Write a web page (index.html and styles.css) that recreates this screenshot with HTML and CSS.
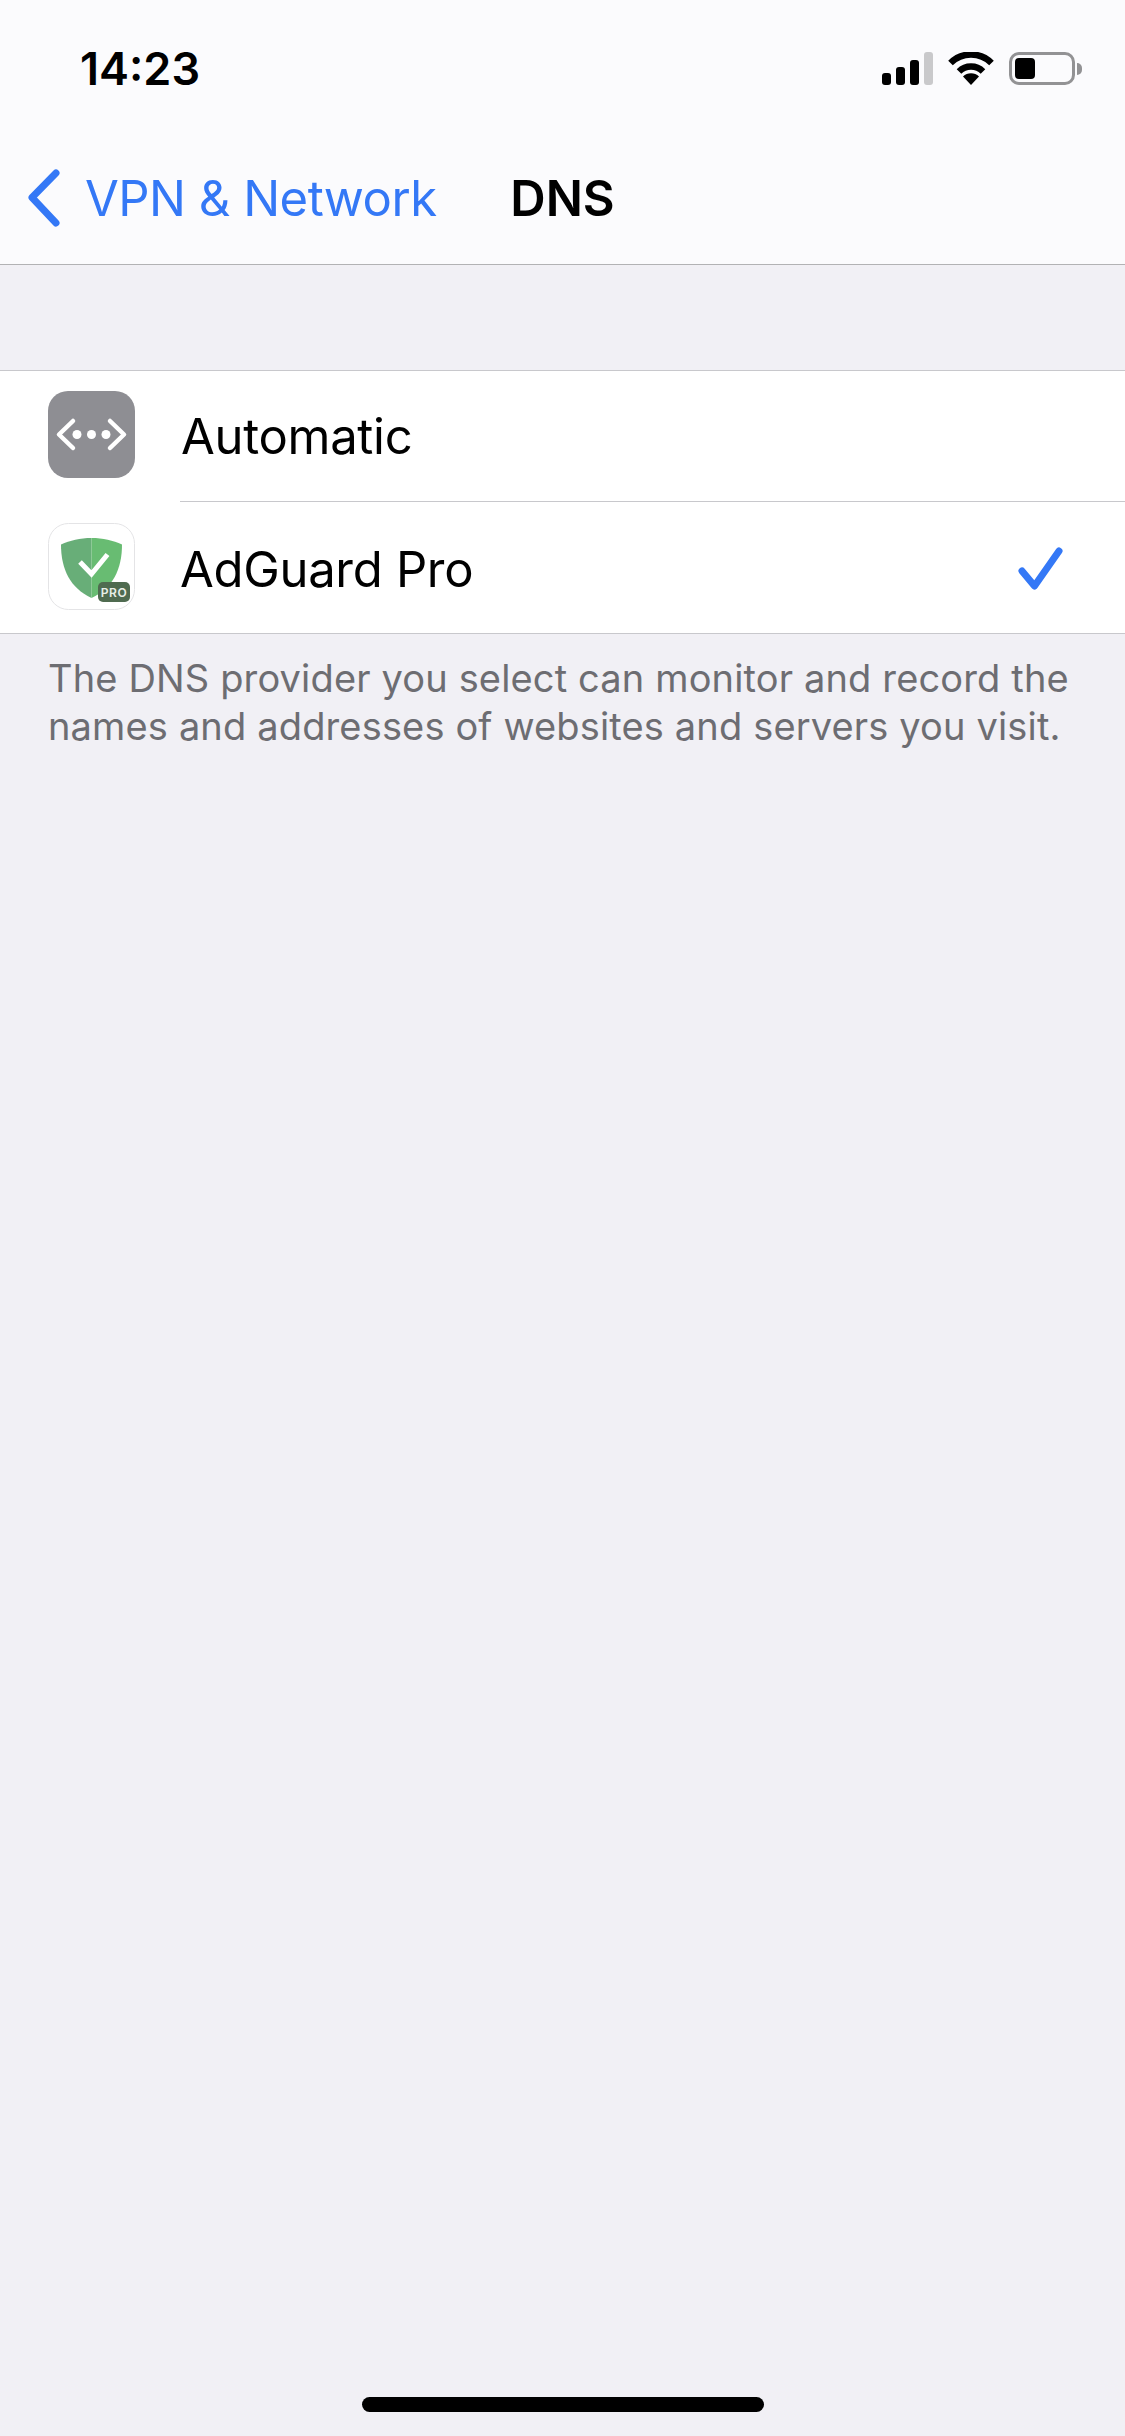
FILE: index.html
```html
<!DOCTYPE html>
<html lang="en">
<head>
    <meta charset="UTF-8">
    <meta name="viewport" content="width=device-width, initial-scale=1.0">
    <title>DNS</title>
    <link rel="stylesheet" href="styles.css">
</head>
<body>
    <div class="screen">
        <header class="top-bar">
            <div class="status-bar">
                <span class="time">14:23</span>
                <div class="status-icons">
                    <div class="signal">
                        <span class="bar bar-1"></span>
                        <span class="bar bar-2"></span>
                        <span class="bar bar-3"></span>
                        <span class="bar bar-4"></span>
                    </div>
                    <svg class="wifi" width="46" height="33" viewBox="0 0 46 33">
                        <path class="wifi-arc" d="M2.5 11 A29 29 0 0 1 43.5 11"/>
                        <path class="wifi-arc" d="M11 19.5 A17 17 0 0 1 35 19.5"/>
                        <path class="wifi-dot" d="M23 33 L15 24.5 A11.5 11.5 0 0 1 31 24.5 Z"/>
                    </svg>
                    <div class="battery">
                        <div class="battery-body"><span class="battery-level"></span></div>
                        <span class="battery-nub"></span>
                    </div>
                </div>
            </div>
            <nav class="nav-bar">
                <a class="back">
                    <svg class="chevron" width="36" height="58" viewBox="0 0 36 58">
                        <path d="M30 4 L6 28.500 L30 54"/>
                    </svg>
                    <span>VPN &amp; Network</span>
                </a>
                <h1 class="nav-title">DNS</h1>
            </nav>
        </header>

        <section class="list">
            <div class="row">
                <svg class="app-icon" width="87" height="87" viewBox="0 0 87 87">
                    <rect class="icon-grey" width="87" height="87" rx="20"/>
                    <path class="icon-code" d="M25 30 L11 43.500 L25 57"/>
                    <path class="icon-code" d="M62 30 L76 43.500 L62 57"/>
                    <circle class="icon-white" cx="29" cy="43.500" r="4.500"/>
                    <circle class="icon-white" cx="43.500" cy="43.500" r="4.500"/>
                    <circle class="icon-white" cx="58" cy="43.500" r="4.500"/>
                </svg>
                <div class="row-main">
                    <span class="row-label">Automatic</span>
                </div>
            </div>
            <div class="row">
                <svg class="app-icon" width="87" height="87" viewBox="0 0 87 87">
                    <rect class="icon-frame" x="0.500" y="0.500" width="86" height="86" rx="20"/>
                    <path class="shield-left" d="M43.500 15 C32 15 22 17.500 13 21.500 C13 46 22 65 43.500 75 Z"/>
                    <path class="shield-right" d="M43.500 15 C55 15 65 17.500 74 21.500 C74 46 65 65 43.500 75 Z"/>
                    <path class="shield-check" d="M32 39 L43.500 51 L59.500 31.500"/>
                    <rect class="pro-badge" x="50" y="59" width="32" height="20" rx="5"/>
                    <text class="pro-text" x="66" y="73.500" text-anchor="middle">PRO</text>
                </svg>
                <div class="row-main">
                    <span class="row-label">AdGuard Pro</span>
                    <svg class="check" width="52" height="50" viewBox="0 0 52 50">
                        <path d="M6 26 L18.500 41 L43 6"/>
                    </svg>
                </div>
            </div>
        </section>

        <p class="footnote">The DNS provider you select can monitor and record the names and addresses of websites and servers you visit.</p>

        <div class="home-indicator"></div>
    </div>
</body>
</html>
```

FILE: styles.css
```css
* {
    margin: 0;
    padding: 0;
    box-sizing: border-box;
}

body {
    font-family: 'Inter', 'Liberation Sans', sans-serif;
    background: #f1f0f5;
    color: #000;
}

.screen {
    display: flex;
    flex-direction: column;
    width: 1125px;
    height: 2436px;
    overflow: hidden;
}

.top-bar {
    background: #fbfbfd;
    border-bottom: 1px solid #b2b2b4;
    height: 265px;
}

.status-bar {
    display: flex;
    justify-content: space-between;
    align-items: center;
    height: 137px;
    padding: 0 43px 0 80px;
}

.time {
    font-size: 45px;
    font-weight: 600;
}

.status-icons {
    display: flex;
    align-items: center;
    gap: 15px;
}

.signal {
    display: flex;
    align-items: flex-end;
    gap: 4.500px;
    height: 33px;
}

.bar {
    width: 9.500px;
    background: #000;
    border-radius: 3px;
}

.bar-1 { height: 12px; }
.bar-2 { height: 18px; }
.bar-3 { height: 25px; }
.bar-4 { height: 33px; background: #c9c9cb; }

.wifi-arc {
    fill: none;
    stroke: #000;
    stroke-width: 6.500;
}

.wifi-dot {
    fill: #000;
}

.battery {
    display: flex;
    align-items: center;
    gap: 2px;
}

.battery-body {
    width: 66px;
    height: 33px;
    padding: 3px;
    border: 3px solid #929294;
    border-radius: 10px;
}

.battery-level {
    display: block;
    width: 20px;
    height: 21px;
    background: #000;
    border-radius: 4px;
}

.battery-nub {
    width: 5px;
    height: 12px;
    background: #929294;
    border-radius: 0 6px 6px 0;
}

.nav-bar {
    display: grid;
    grid-template-columns: 1fr auto 1fr;
    align-items: center;
    height: 127px;
    padding-bottom: 5px;
}

.back {
    display: flex;
    align-items: center;
    gap: 23px;
    padding-left: 26px;
    font-size: 49px;
    letter-spacing: -0.5px;
    color: #3478f6;
    white-space: nowrap;
}

.chevron path {
    fill: none;
    stroke: #3478f6;
    stroke-width: 7;
    stroke-linecap: round;
    stroke-linejoin: round;
}

.nav-title {
    font-size: 49px;
    font-weight: 600;
}

.list {
    margin-top: 105px;
    background: #fff;
    border-top: 1px solid #c8c8cc;
    border-bottom: 1px solid #c8c8cc;
}

.row {
    display: flex;
    align-items: center;
    gap: 46px;
    padding-left: 48px;
}

.row:first-child .app-icon {
    margin-bottom: 3px;
}

.row + .row .app-icon {
    margin-bottom: 1px;
}

.app-icon {
    flex-shrink: 0;
}

.row-main {
    flex: 1;
    display: flex;
    justify-content: space-between;
    align-items: center;
    height: 130px;
    padding-right: 57px;
}

.row + .row .row-main {
    border-top: 1px solid #c8c8cc;
    height: 132px;
    padding-top: 4px;
    margin-left: -1px;
}

.row-label {
    font-size: 49px;
    letter-spacing: -0.3px;
}

.icon-grey { fill: #8e8e93; }
.icon-white { fill: #fff; }

.icon-code {
    fill: none;
    stroke: #fff;
    stroke-width: 4.500;
    stroke-linecap: round;
    stroke-linejoin: round;
}

.icon-frame {
    fill: #fff;
    stroke: #e4e4e6;
}

.shield-left { fill: #68ae78; }
.shield-right { fill: #68bc72; }

.shield-check {
    fill: none;
    stroke: #fff;
    stroke-width: 5;
}

.pro-badge { fill: #4f6b50; }

.pro-text {
    font-size: 12px;
    font-weight: 600;
    letter-spacing: 0.5px;
    fill: #e8efe8;
}

.check path {
    fill: none;
    stroke: #3478f6;
    stroke-width: 7;
    stroke-linecap: round;
    stroke-linejoin: round;
}

.footnote {
    padding: 20px 48px 0;
    font-size: 38px;
    line-height: 48px;
    letter-spacing: 0.15px;
    color: #6d6d72;
}

.home-indicator {
    width: 402px;
    height: 15px;
    margin: auto auto 24px;
    background: #000;
    border-radius: 8px;
}
```
